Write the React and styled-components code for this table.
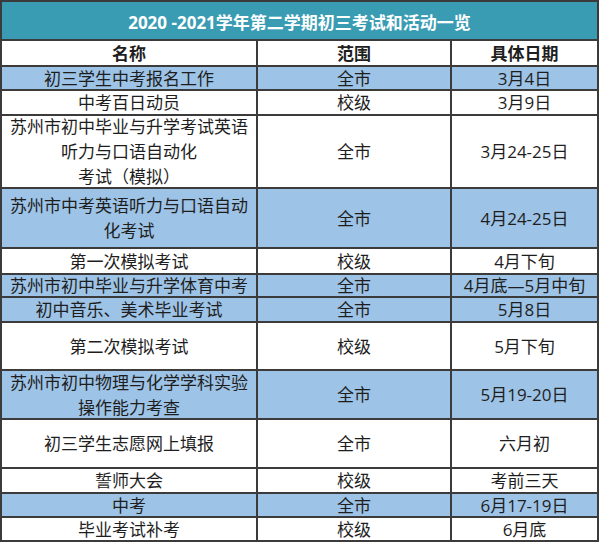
import React from 'react'
import styled, { createGlobalStyle } from 'styled-components'

// activities: name, scope, date, row height (px between grid lines), blue highlight
const rows = [
  { name: '初三学生中考报名工作', scope: '全市', date: '3月4日', h: 22, hl: true },
  { name: '中考百日动员', scope: '校级', date: '3月9日', h: 23 },
  { name: '苏州市初中毕业与升学考试英语\n听力与口语自动化\n考试（模拟）', scope: '全市', date: '3月24-25日', h: 71 },
  { name: '苏州市中考英语听力与口语自动\n化考试', scope: '全市', date: '4月24-25日', h: 58, hl: true },
  { name: '第一次模拟考试', scope: '校级', date: '4月下旬', h: 24 },
  { name: '苏州市初中毕业与升学体育中考', scope: '全市', date: '4月底—5月中旬', h: 21, hl: true },
  { name: '初中音乐、美术毕业考试', scope: '全市', date: '5月8日', h: 23, hl: true },
  { name: '第二次模拟考试', scope: '校级', date: '5月下旬', h: 46 },
  { name: '苏州市初中物理与化学学科实验\n操作能力考查', scope: '全市', date: '5月19-20日', h: 47, hl: true },
  { name: '初三学生志愿网上填报', scope: '全市', date: '六月初', h: 47 },
  { name: '誓师大会', scope: '校级', date: '考前三天', h: 23 },
  { name: '中考', scope: '全市', date: '6月17-19日', h: 22, hl: true },
  { name: '毕业考试补考', scope: '校级', date: '6月底', h: 22 },
]

const GlobalStyle = createGlobalStyle`
  body {
    margin: 0;
    background: #ffffff;
    font-family: "Open Sans", "Noto Sans CJK SC", sans-serif;
  }
`

const Grid = styled.div`
  display: grid;
  grid-template-columns: 254px 192px 145px;
  grid-template-rows: ${({ heights }) => heights.map((h) => h + 'px').join(' ')};
  gap: 2px;
  padding: 2px;
  width: 595px;
  background: #3b3b3b;
`

const Title = styled.div`
  grid-column: 1 / span 3;
  display: flex;
  align-items: center;
  justify-content: center;
  background: #3a9cb3;
  color: #ffffff;
  font-size: 17px;
  font-weight: 700;
  padding-top: 1px;
`

const Cell = styled.div`
  display: flex;
  align-items: center;
  justify-content: center;
  text-align: center;
  white-space: pre-line;
  background: ${({ hl }) => (hl ? '#9dc3e6' : '#ffffff')};
  color: #1e1e1e;
  font-size: 17px;
  font-weight: ${({ head }) => (head ? 700 : 400)};
  line-height: 25px;
`

const App = () => {
  const heights = [37, 24, ...rows.map((r) => r.h)]
  return (
    <>
      <GlobalStyle />
      <Grid heights={heights}>
        <Title>2020 -2021学年第二学期初三考试和活动一览</Title>
        <Cell head>名称</Cell>
        <Cell head>范围</Cell>
        <Cell head>具体日期</Cell>
        {rows.map((r, i) => (
          <React.Fragment key={i}>
            <Cell hl={r.hl}>{r.name}</Cell>
            <Cell hl={r.hl}>{r.scope}</Cell>
            <Cell hl={r.hl}>{r.date}</Cell>
          </React.Fragment>
        ))}
      </Grid>
    </>
  )
}

export default App
